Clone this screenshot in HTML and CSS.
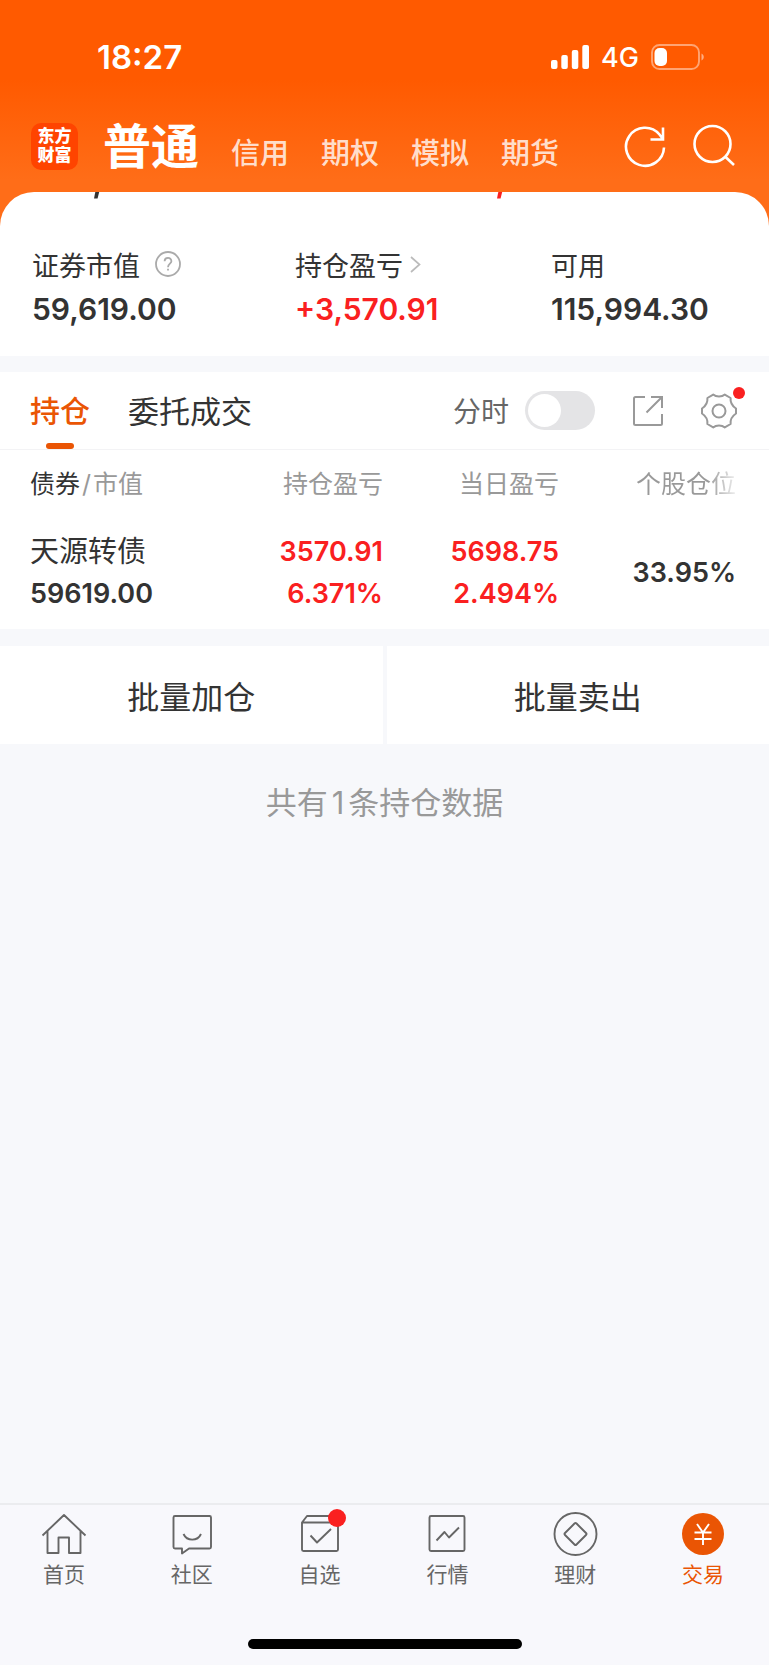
FILE: index.html
```html
<!DOCTYPE html>
<html lang="zh-CN">
<head>
<meta charset="utf-8">
<meta name="viewport" content="width=device-width, initial-scale=1">
<title>交易 - 持仓</title>
<link rel="stylesheet" href="styles.css">
</head>
<body>
<div class="page">
  <header class="header">
    <div class="status">
      <time class="status-time">18:27</time>
      <div class="status-right">
        <svg width="38" height="24" viewBox="0 0 38 24" fill="#fff" aria-hidden="true"><rect x="0" y="15" width="6.500" height="9" rx="2"/><rect x="10.300" y="10" width="6.500" height="14" rx="2"/><rect x="20.800" y="5" width="6.500" height="19" rx="2"/><rect x="31.300" y="0" width="6.700" height="24" rx="2"/></svg>
        <span class="status-net">4G</span>
        <svg width="54" height="26" viewBox="0 0 54 26" aria-hidden="true"><rect x="1" y="1" width="47" height="24" rx="7.500" fill="none" stroke="#fff" stroke-opacity=".45" stroke-width="1.900"/><rect x="3.500" y="4" width="12.500" height="18" rx="5" fill="#fff"/><path d="M50.500 9.500c3 1.500 3 5.500 0 7z" fill="#fff" fill-opacity=".5"/></svg>
      </div>
    </div>
    <div class="topbar">
      <div class="logo"><span>东方</span><span>财富</span></div>
      <nav class="accounts">
        <button class="account account-on">普通</button>
        <button class="account">信用</button>
        <button class="account">期权</button>
        <button class="account">模拟</button>
        <button class="account">期货</button>
      </nav>
      <button class="tool" aria-label="刷新"><svg width="44" height="44" viewBox="0 0 44 44" fill="none" stroke="#fff" stroke-width="2.600"><path d="M41 23.500A19 19 0 1 1 36.500 10.500L39.500 14.500M40 3.500V15.500H27.500"/></svg></button>
      <button class="tool" aria-label="搜索"><svg width="44" height="44" viewBox="0 0 44 44" fill="none" stroke="#fff" stroke-width="2.600"><circle cx="20.500" cy="20" r="18"/><path d="M33 32.500L42 41"/></svg></button>
    </div>
  </header>

  <main class="main">
    <section class="card">
      <div class="summary peek" aria-hidden="true">
        <svg class="tail tail-a" width="6" height="7" viewBox="0 0 6 7"><path d="M1.300 0H5.200L3.600 6.500H0z" fill="#333"/></svg>
        <svg class="tail tail-b" width="6" height="7" viewBox="0 0 6 7"><path d="M1.300 0H5.200L3.600 6.500H0z" fill="#fa2020"/></svg>
      </div>
      <div class="summary">
        <div class="stat">
          <div class="stat-label">证券市值
            <button class="help" aria-label="说明"><svg width="26" height="26" viewBox="0 0 26 26" fill="none" stroke="#aaa" stroke-width="1.800"><circle cx="13" cy="13" r="12"/><path d="M9.600 10.300C9.600 5.800 16.400 5.800 16.400 10.200C16.400 12.700 13 12.800 13 16.300M13 17.700V19.600"/></svg></button>
          </div>
          <div class="stat-value">59,619.00</div>
        </div>
        <div class="stat">
          <div class="stat-label">持仓盈亏
            <svg class="chevron" width="11" height="17" viewBox="0 0 11 17" fill="none" stroke="#bbb" stroke-width="1.700"><path d="M1 1L9.500 8.500L1 16"/></svg>
          </div>
          <div class="stat-value up">+3,570.91</div>
        </div>
        <div class="stat">
          <div class="stat-label">可用</div>
          <div class="stat-value">115,994.30</div>
        </div>
      </div>
    </section>

    <section class="holdings">
      <div class="tabs">
        <button class="tab tab-on">持仓</button>
        <button class="tab">委托成交</button>
        <label class="switch-label" for="intraday">分时</label>
        <input class="switch" type="checkbox" role="switch" id="intraday">
        <button class="action" aria-label="分享"><svg width="30" height="30" viewBox="0 0 30 30" fill="none" stroke="#999" stroke-width="2"><path d="M12 1H2.500Q1 1 1 2.500V27.500Q1 29 2.500 29H27.500Q29 29 29 27.500V18M18 1H29V12M29 1L13.500 16.500"/></svg></button>
        <button class="action action-set" aria-label="设置"><svg width="36" height="36" viewBox="0 0 36 36" fill="none" stroke="#999" stroke-width="2" stroke-linejoin="round"><path d="M12.200 1.600C15 4.200 21 4.200 23.800 1.600L29.600 5C29.200 9 31 12.800 35 15.500V20.500C31 23.200 29.200 27 29.600 31L23.800 34.400C21 31.800 15 31.800 12.200 34.400L6.400 31C6.800 27 5 23.200 1 20.500V15.500C5 12.800 6.800 9 6.400 5Z"/><circle cx="18" cy="18" r="6.500"/></svg><i class="dot"></i></button>
      </div>
      <table class="table">
        <thead>
          <tr><th><span class="dark">债券</span><span class="slash">/</span>市值</th><th>持仓盈亏</th><th>当日盈亏</th><th><span class="fade">个股仓位</span></th></tr>
        </thead>
        <tbody>
          <tr>
            <td><div class="name">天源转债</div><div>59619.00</div></td>
            <td class="up"><div>3570.91</div><div>6.371%</div></td>
            <td class="up"><div>5698.75</div><div>2.494%</div></td>
            <td>33.95%</td>
          </tr>
        </tbody>
      </table>
    </section>

    <div class="batch">
      <button class="batch-btn">批量加仓</button>
      <button class="batch-btn">批量卖出</button>
    </div>
    <p class="count">共有<span class="count-num">1</span>条持仓数据</p>
  </main>

  <footer class="footer">
    <nav class="nav">
      <a class="nav-item" href="#home"><svg width="46" height="44" viewBox="0 0 46 44" fill="none" stroke="#666" stroke-width="1.900" stroke-linejoin="round"><path d="M1.500 23.500L23 3L44.500 23.500M6.500 19V41H17.500V25.500H28V41H39.500V19"/></svg>首页</a>
      <a class="nav-item" href="#community"><svg width="46" height="44" viewBox="0 0 46 44" fill="none" stroke="#666" stroke-width="1.900" stroke-linejoin="round"><path d="M6 4H40.500Q42 4 42 5.500V35Q42 36.500 40.500 36.500H20L13 41.500V36.500H6Q4.500 36.500 4.500 35V5.500Q4.500 4 6 4Z"/><path d="M14.500 22C18 29.500 28.500 29.500 32 22"/></svg>社区</a>
      <a class="nav-item" href="#watch"><svg width="46" height="44" viewBox="0 0 46 44" fill="none" stroke="#666" stroke-width="1.900" stroke-linejoin="round"><path d="M5 10.500L10 4H36L41 10.500M5 10.500H41V37.500Q41 39 39.500 39H6.500Q5 39 5 37.500Z"/><path d="M13.500 23.500L20 30.500L34 17"/></svg><i class="badge"></i>自选</a>
      <a class="nav-item" href="#market"><svg width="46" height="44" viewBox="0 0 46 44" fill="none" stroke="#666" stroke-width="1.900" stroke-linejoin="round"><rect x="5.500" y="4" width="35" height="35" rx="1.500"/><path d="M12.500 28.500L20.500 20L25 25.500L35 15.500"/></svg>行情</a>
      <a class="nav-item" href="#wealth"><svg width="46" height="44" viewBox="0 0 46 44" fill="none" stroke="#666" stroke-width="1.900" stroke-linejoin="round"><circle cx="23.500" cy="22" r="21"/><path d="M22.500 11.500Q23.500 10.500 24.500 11.500L34 21Q35 22 34 23L24.500 32.500Q23.500 33.500 22.500 32.500L13 23Q12 22 13 21Z"/></svg>理财</a>
      <a class="nav-item nav-on" href="#trade" aria-current="page"><svg width="46" height="44" viewBox="0 0 46 44" fill="none" stroke="#fff" stroke-width="1.900"><circle cx="23" cy="22" r="21" fill="#ea5504" stroke="none"/><path d="M17 12L23 20.500L29 12M23 20.500V33M14.500 20.500H31.500M14.500 27H31.500"/></svg>交易</a>
    </nav>
    <div class="home-bar"></div>
  </footer>
</div>
</body>
</html>
```
FILE: styles.css
```css
* { box-sizing: border-box; }
body {
  margin: 0;
  background: #f7f8fb;
  color: #333;
  font-family: Inter, "Noto Sans CJK SC", sans-serif;
}
button {
  border: 0;
  padding: 0;
  background: none;
  color: inherit;
  font: inherit;
  cursor: pointer;
}
svg { display: block; flex: none; }
.page { min-height: 100vh; display: flex; flex-direction: column; }
.up { color: #fa2020; }

.header {
  padding-bottom: 66px;
  background: linear-gradient(#ff5a00 0, #ff5a00 80px, #ff6d18 180px, #ff6d18 100%);
  color: #fff;
}
.status {
  display: flex;
  justify-content: space-between;
  align-items: center;
  height: 114px;
  padding: 0 64px 0 97px;
}
.status-time { font-size: 33px; font-weight: 600; }
.status-right { display: flex; align-items: center; gap: 12px; }
.status-net { font-size: 27px; font-weight: 500; }
.topbar { display: flex; align-items: center; height: 64px; padding: 0 33px 0 31px; }
.logo {
  display: flex;
  flex-direction: column;
  justify-content: center;
  align-items: center;
  width: 47px;
  height: 47px;
  border-radius: 10px;
  background: #ff4400;
  font-size: 17px;
  font-weight: 900;
  line-height: 19px;
}
.accounts { flex: 1; display: flex; align-items: baseline; gap: 32px; margin-left: 25px; padding-top: 8px; }
.account { font-size: 29px; font-weight: 500; line-height: 60px; color: rgba(255, 255, 255, .8); }
.account-on { font-size: 48px; font-weight: 700; color: #fff; }
.tool + .tool { margin-left: 25px; }

.main { flex: 1; }
.card {
  margin-top: -52px;
  padding-bottom: 24px;
  border-radius: 34px 34px 0 0;
  background: #fff;
}
.summary { display: grid; grid-template-columns: 263fr 256fr 218fr; padding-left: 32px; }
.peek { height: 52px; }
.tail-a { margin-left: 62px; }
.tail-b { margin-left: 202px; }
.stat-label { display: flex; align-items: center; height: 40px; font-size: 27px; }
.help { margin-left: 15px; }
.chevron { margin-left: 7px; }
.stat-value { margin-top: 2px; font-size: 30px; font-weight: 600; line-height: 46px; }

.holdings { margin-top: 16px; background: #fff; }
.tabs {
  display: flex;
  align-items: center;
  height: 78px;
  padding: 0 32px 0 30px;
  border-bottom: 1px solid #f3f3f5;
}
.tab { position: relative; height: 77px; padding-bottom: 3px; font-size: 31px; }
.tab-on { margin-right: 38px; font-size: 30px; font-weight: 500; color: #ea5504; }
.tab-on::after {
  content: "";
  position: absolute;
  left: 50%;
  bottom: 0;
  width: 28px;
  height: 6px;
  margin-left: -14px;
  border-radius: 3px;
  background: #ea5504;
}
.switch-label { margin-left: auto; padding-bottom: 2px; font-size: 28px; color: #666; }
.switch {
  appearance: none;
  width: 70px;
  height: 39px;
  margin: 0 0 0 16px;
  padding: 3px;
  border-radius: 20px;
  background: #e4e4e6;
}
.switch::before {
  content: "";
  display: block;
  width: 33px;
  height: 33px;
  border-radius: 50%;
  background: #fff;
}
.switch:checked { background: #ea5504; }
.switch:checked::before { margin-left: auto; }
.action { margin-left: 38px; }
.action-set { position: relative; }
.dot {
  position: absolute;
  top: -6px;
  right: -8px;
  width: 12px;
  height: 12px;
  border-radius: 50%;
  background: #fa2020;
}

.table { width: 100%; table-layout: fixed; border-collapse: collapse; text-align: right; }
.table th { height: 63px; padding: 0; font-size: 25px; font-weight: 400; color: #999; }
.table td { height: 116px; padding: 4px 0 0; font-size: 27px; font-weight: 600; line-height: 42px; }
.table th:first-child, .table td:first-child { width: 25%; padding-left: 30px; text-align: left; }
.table th:nth-child(2) { width: 24.8%; }
.table th:nth-child(3) { width: 22.9%; }
.table th:last-child, .table td:last-child { padding-right: 33px; }
.dark { color: #333; }
.slash { margin: 0 2px; }
.name { font-size: 29px; font-weight: 400; }
.fade {
  background: linear-gradient(90deg, #999 72%, #eee);
  background-clip: text;
  -webkit-background-clip: text;
  color: transparent;
}

.batch { display: grid; grid-template-columns: 1fr 1fr; gap: 4px; margin-top: 17px; }
.batch-btn { height: 98px; background: #fff; font-size: 32px; }
.count { margin: 36px 0 0; text-align: center; font-size: 31px; line-height: 46px; color: #999; }
.count-num { margin: 0 4px; }

.footer { position: sticky; bottom: 0; border-top: 2px solid #ebecef; background: #f8f8fc; }
.nav { display: flex; height: 134px; padding: 7px 2px 0 0; }
.nav-item {
  position: relative;
  flex: 1;
  display: flex;
  flex-direction: column;
  align-items: center;
  gap: 3px;
  font-size: 21px;
  line-height: 32px;
  color: #666;
  text-decoration: none;
}
.nav-on { color: #ea5504; }
.badge {
  position: absolute;
  top: -3px;
  left: 50%;
  width: 18px;
  height: 18px;
  margin-left: 8px;
  border-radius: 50%;
  background: #fa2020;
}
.home-bar { width: 274px; height: 10px; margin: 0 auto 16px; border-radius: 5px; background: #000; }
```
